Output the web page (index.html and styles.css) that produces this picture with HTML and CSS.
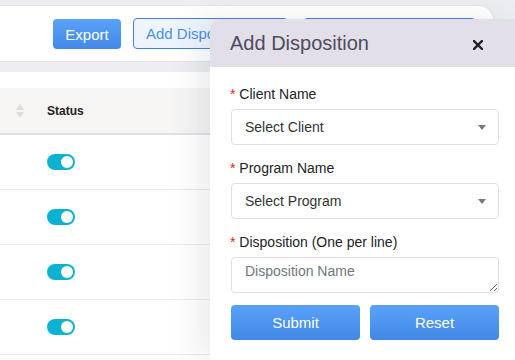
FILE: index.html
```html
<!DOCTYPE html>
<html>
<head>
<meta charset="utf-8">
<link rel="stylesheet" href="styles.css">
</head>
<body>
<div class="page">
  <div class="toolbar">
    <button class="btn btn-solid export">Export</button>
    <button class="btn btn-outline add">Add Disposition</button>
    <button class="btn btn-outline bulk"></button>
  </div>
  <div class="table">
    <div class="thead">
      <span class="sort"><svg width="8" height="14" viewBox="0 0 8 14"><path d="M4 0 L8 6 L0 6 Z" fill="#dcdcdc"/><path d="M0 8 L8 8 L4 14 Z" fill="#dcdcdc"/></svg></span>
      <span class="th">Status</span>
    </div>
    <div class="row"><span class="toggle"></span></div>
    <div class="row"><span class="toggle"></span></div>
    <div class="row"><span class="toggle"></span></div>
    <div class="row"><span class="toggle"></span></div>
  </div>
</div>

<div class="modal">
  <div class="modal-head">
    <h2>Add Disposition</h2>
    <svg class="close" width="10" height="10" viewBox="0 0 10 10"><path d="M1 1 L9 9 M9 1 L1 9" stroke="#222" stroke-width="2.4" stroke-linecap="square"/></svg>
  </div>
  <div class="modal-body">
    <label class="lbl"><span class="req">*</span> Client Name</label>
    <div class="select"><span>Select Client</span><i class="caret"></i></div>
    <label class="lbl"><span class="req">*</span> Program Name</label>
    <div class="select"><span>Select Program</span><i class="caret"></i></div>
    <label class="lbl"><span class="req">*</span> Disposition (One per line)</label>
    <textarea class="area" placeholder="Disposition Name"></textarea>
    <div class="actions">
      <button class="btn btn-solid big">Submit</button>
      <button class="btn btn-solid big">Reset</button>
    </div>
  </div>
</div>
</body>
</html>
```

FILE: styles.css
```css
* { box-sizing: border-box; }
html, body { margin: 0; padding: 0; }
body {
  width: 515px;
  height: 360px;
  overflow: hidden;
  background: #eceef1;
  font-family: "Liberation Sans", Arial, sans-serif;
  position: relative;
}
.page { padding-top: 5px; }
.toolbar {
  width: 494px;
  height: 57px;
  background: #fff;
  border: 1px solid #e1e3e6;
  border-left: none;
  border-radius: 0 15px 0 0;
  display: flex;
  align-items: flex-start;
  padding: 12px 0 0 53px;
  gap: 12px;
}
.btn {
  font-family: "Liberation Sans", Arial, sans-serif;
  font-size: 15px;
  border-radius: 4px;
  cursor: pointer;
}
.btn-solid {
  border: none;
  color: #fff;
  background: linear-gradient(#5ba1f8, #4189e6);
}
.export { width: 68px; height: 30px; margin-top: 1px; }
.btn-outline {
  height: 31px;
  background: #edf4fe;
  border: 1px solid #3f7fe9;
  color: #4a90e2;
  text-align: left;
  padding: 0 12px;
}
.add { width: 155px; }
.bulk { width: 173px; margin-left: 3px; }
.table {
  margin-top: 10px;
  background: #fff;
  height: 300px;
  padding-top: 16px;
}
.thead {
  height: 47px;
  background: #f6f5f4;
  border-bottom: 2px solid #dee1e5;
  display: flex;
  align-items: center;
  padding-left: 16px;
}
.sort { display: flex; width: 31px; }
.th { font-size: 12px; font-weight: bold; color: #222; }
.row {
  height: 55px;
  border-bottom: 1px solid #e8e9ec;
  display: flex;
  align-items: center;
  padding-left: 47px;
}
.toggle {
  width: 28px;
  height: 16px;
  border-radius: 8px;
  background: #0cb2d1;
  position: relative;
}
.toggle::after {
  content: "";
  position: absolute;
  right: 2px;
  top: 2px;
  width: 12px;
  height: 12px;
  border-radius: 50%;
  background: #fff;
}

.modal {
  position: absolute;
  left: 210px;
  top: 19px;
  width: 305px;
  height: 341px;
  background: #fff;
  border-radius: 10px 0 0 0;
  box-shadow: -12px 0 30px rgba(60, 70, 90, 0.10);
  overflow: hidden;
}
.modal-head {
  height: 48px;
  background: #e2dfe9;
  display: flex;
  align-items: center;
  padding: 0 0 0 20px;
}
.modal-head h2 {
  margin: 0;
  font-size: 20px;
  font-weight: normal;
  color: #4d4c5e;
  flex: 0 0 auto;
  width: 243px;
}
.close { margin-top: 3px; }
.modal-body {
  width: 289px;
  padding: 19px 0 0 21px;
  display: flex;
  flex-direction: column;
}
.lbl {
  font-size: 14px;
  line-height: 16px;
  color: #222;
  margin-bottom: 7px;
  margin-left: -1px;
}
.req { color: #e3231b; }
.select {
  height: 36px;
  border: 1px solid #dcdfe4;
  border-radius: 4px;
  display: flex;
  align-items: center;
  justify-content: space-between;
  padding: 0 12px 0 13px;
  font-size: 14px;
  color: #333;
  margin-bottom: 15px;
}
.caret {
  width: 0; height: 0;
  border-left: 4px solid transparent;
  border-right: 4px solid transparent;
  border-top: 5px solid #7a7a7a;
}
.area {
  height: 36px;
  border: 1px solid #dcdfe4;
  border-radius: 4px;
  padding: 5px 13px;
  font-family: "Liberation Sans", Arial, sans-serif;
  font-size: 14px;
  color: #333;
  margin: 0 0 12px 0;
  resize: vertical;
}
.area::placeholder { color: #6f7780; }
.actions {
  display: flex;
  gap: 10px;
}
.big { flex: 1; height: 35px; font-size: 15px; }
```
